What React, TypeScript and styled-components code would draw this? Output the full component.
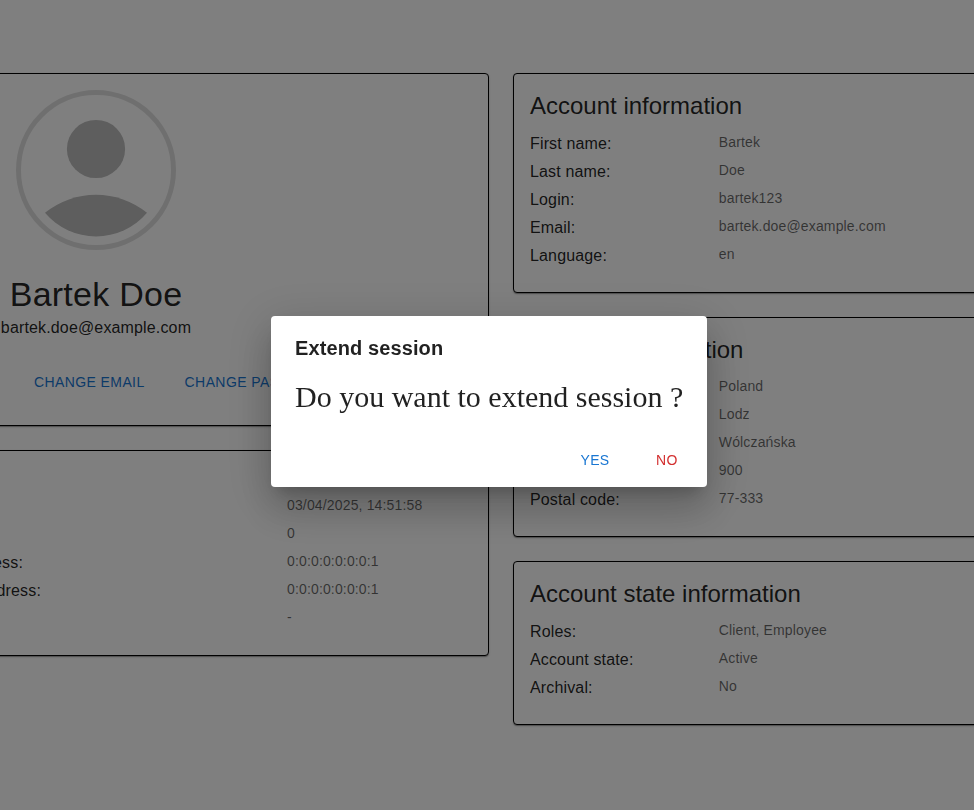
import React from 'react';
import styled, { createGlobalStyle } from 'styled-components';

const GlobalStyle = createGlobalStyle`
  *, *::before, *::after { box-sizing: border-box; }
  html, body { margin: 0; height: 100%; overflow: hidden; background: #fff; }
  body { font-family: "Liberation Sans", Arial, sans-serif; color: rgba(0, 0, 0, 0.87); }
  p, h1, h2, h3 { margin: 0; font-weight: 400; }
`;

const Page = styled.main`
  width: 100vw;
  height: 100vh;
  overflow: hidden;
  display: flex;
  justify-content: flex-start;
  align-items: flex-start;
`;

const Columns = styled.div`
  display: grid;
  grid-template-columns: 786px 786px;
  column-gap: 24px;
  align-items: start;
  flex: none;
  margin: 73px 0 0 -297px;
`;

const Column = styled.div`
  display: flex;
  flex-direction: column;
  gap: 24px;
`;

const Card = styled.section`
  border: 1px solid #000;
  border-radius: 4px;
  padding: 16px 16px 24px;
  background: #fff;
  box-shadow: 0 2px 1px -1px rgba(0, 0, 0, 0.2), 0 1px 1px 0 rgba(0, 0, 0, 0.14),
    0 1px 3px 0 rgba(0, 0, 0, 0.12);
`;

const ProfileCard = styled(Card)`
  display: flex;
  flex-direction: column;
  align-items: center;
  height: 353px;
`;

const Avatar = styled.svg`
  display: block;
  width: 160px;
  height: 160px;
  margin-bottom: 23px;
`;

const Name = styled.h1`
  font-size: 34px;
  line-height: 42px;
  letter-spacing: 0.00735em;
`;

const Email = styled.p`
  margin-top: 1px;
  font-size: 16px;
  line-height: 24px;
  letter-spacing: 0.00938em;
`;

const ProfileActions = styled.div`
  align-self: stretch;
  display: flex;
  gap: 24px;
  margin-top: 24px;
  padding-left: 306px;
`;

const Button = styled.button<{ $tone?: 'primary' | 'error' }>`
  border: 0;
  background: transparent;
  border-radius: 4px;
  min-width: 64px;
  padding: 6px 8px;
  font-family: inherit;
  font-size: 14px;
  line-height: 24.5px;
  letter-spacing: 0.02857em;
  text-transform: uppercase;
  white-space: nowrap;
  color: ${({ $tone }) => ($tone === 'error' ? '#d32f2f' : '#1976d2')};
`;

const CardTitle = styled.h2`
  font-size: 24px;
  line-height: 32px;
  margin-bottom: 10px;
`;

const Rows = styled.dl<{ $wide?: boolean }>`
  margin: 0;
  display: grid;
  grid-template-columns: ${({ $wide }) => ($wide ? '567px 1fr' : '188.8px 1fr')};
  grid-auto-rows: 24px;
  row-gap: 4px;
`;

const Label = styled.dt<{ $width?: number }>`
  font-size: 16px;
  line-height: 24px;
  letter-spacing: 0.00938em;
  width: ${({ $width }) => ($width ? `${$width}px` : 'auto')};
  text-align: ${({ $width }) => ($width ? 'right' : 'left')};
`;

const Value = styled.dd`
  margin: 0;
  font-size: 14px;
  line-height: 20px;
  letter-spacing: 0.01071em;
  color: rgba(0, 0, 0, 0.6);
`;

const Backdrop = styled.div`
  position: fixed;
  inset: 0;
  background: rgba(0, 0, 0, 0.5);
  display: flex;
  align-items: flex-start;
  padding: 316px 0 0 271px;
`;

const Dialog = styled.div`
  width: 436px;
  height: 171px;
  background: #fff;
  border-radius: 4px;
  box-shadow: 0 11px 15px -7px rgba(0, 0, 0, 0.2), 0 24px 38px 3px rgba(0, 0, 0, 0.14),
    0 9px 46px 8px rgba(0, 0, 0, 0.12);
`;

const DialogTitle = styled.h2`
  padding: 16px 24px;
  font-size: 20px;
  font-weight: 700;
  line-height: 32px;
  letter-spacing: 0.0055em;
`;

const DialogText = styled.p`
  padding: 0 24px 20px;
  font-family: "Liberation Serif", "Times New Roman", serif;
  font-size: 30px;
  line-height: 34px;
  white-space: nowrap;
`;

const DialogActions = styled.div`
  display: flex;
  justify-content: flex-end;
  gap: 8px;
  padding: 8px;
`;

type Entry = { label: string; value: string; labelWidth?: number };

const loginRows: Entry[] = [
  { label: '', value: '' },
  { label: '', value: '03/04/2025, 14:51:58' },
  { label: '', value: '0' },
  { label: 'Last successful login IP address:', value: '0:0:0:0:0:0:0:1', labelWidth: 303 },
  { label: 'Last unsuccessful login IP address:', value: '0:0:0:0:0:0:0:1', labelWidth: 321 },
  { label: '', value: '-' },
];

const accountRows: Entry[] = [
  { label: 'First name:', value: 'Bartek' },
  { label: 'Last name:', value: 'Doe' },
  { label: 'Login:', value: 'bartek123' },
  { label: 'Email:', value: 'bartek.doe@example.com' },
  { label: 'Language:', value: 'en' },
];

const addressRows: Entry[] = [
  { label: 'Country:', value: 'Poland' },
  { label: 'City:', value: 'Lodz' },
  { label: 'Street:', value: 'Wólczańska' },
  { label: 'Street number:', value: '900' },
  { label: 'Postal code:', value: '77-333' },
];

const stateRows: Entry[] = [
  { label: 'Roles:', value: 'Client, Employee' },
  { label: 'Account state:', value: 'Active' },
  { label: 'Archival:', value: 'No' },
];

function Details({ rows, wide }: { rows: Entry[]; wide?: boolean }) {
  return (
    <Rows $wide={wide}>
      {rows.map((row, i) => (
        <React.Fragment key={i}>
          <Label $width={row.labelWidth}>{row.label}</Label>
          <Value>{row.value}</Value>
        </React.Fragment>
      ))}
    </Rows>
  );
}

export default function App() {
  return (
    <>
      <GlobalStyle />
      <Page>
        <Columns>
          <Column>
            <ProfileCard>
              <Avatar viewBox="0 0 160 160" aria-hidden="true">
                <circle cx="80" cy="80" r="77.5" fill="none" stroke="#dfdfdf" strokeWidth="5" />
                <circle cx="80" cy="59" r="29.1" fill="#bcbcbc" />
                <path d="M29 122.7A81.5 81.5 0 0 1 131 122.7A66.7 66.7 0 0 1 29 122.7Z" fill="#bcbcbc" />
              </Avatar>
              <Name>Bartek Doe</Name>
              <Email>bartek.doe@example.com</Email>
              <ProfileActions>
                <Button>Change email</Button>
                <Button>Change password</Button>
              </ProfileActions>
            </ProfileCard>
            <Card>
              <Details rows={loginRows} wide />
            </Card>
          </Column>
          <Column>
            <Card>
              <CardTitle>Account information</CardTitle>
              <Details rows={accountRows} />
            </Card>
            <Card>
              <CardTitle>Address information</CardTitle>
              <Details rows={addressRows} />
            </Card>
            <Card>
              <CardTitle>Account state information</CardTitle>
              <Details rows={stateRows} />
            </Card>
          </Column>
        </Columns>
      </Page>
      <Backdrop>
        <Dialog role="dialog" aria-label="Extend session">
          <DialogTitle>Extend session</DialogTitle>
          <DialogText>Do you want to extend session ?</DialogText>
          <DialogActions>
            <Button>Yes</Button>
            <Button $tone="error">No</Button>
          </DialogActions>
        </Dialog>
      </Backdrop>
    </>
  );
}
